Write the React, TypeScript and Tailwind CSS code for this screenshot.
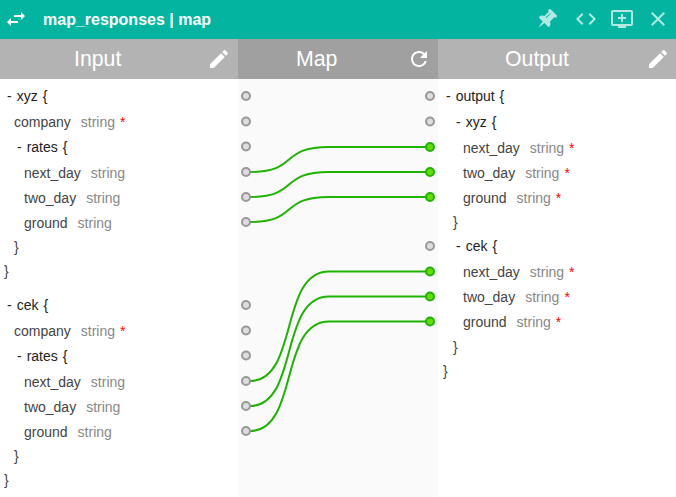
import { MdAddToQueue, MdClose, MdCode, MdEdit, MdRefresh, MdSwapHoriz } from "react-icons/md";

type Row = { kind: "open" | "field" | "close"; name?: string; required?: boolean; cls: string };

const inputGroup = (name: string): Row[] => [
  { kind: "open", name, cls: "h-[26px] pl-[7px]" },
  { kind: "field", name: "company", required: true, cls: "h-[25px] pl-[14px]" },
  { kind: "open", name: "rates", cls: "h-[26px] pl-[17px]" },
  { kind: "field", name: "next_day", cls: "h-[25px] pl-6" },
  { kind: "field", name: "two_day", cls: "h-[25px] pl-6" },
  { kind: "field", name: "ground", cls: "h-6 pl-6" },
  { kind: "close", cls: "h-6 pl-[14px]" },
  { kind: "close", cls: "h-[34px] pl-1" },
];

const inputRows: Row[] = [...inputGroup("xyz"), ...inputGroup("cek")];

const outputRows: Row[] = [
  { kind: "open", name: "output", cls: "h-[26px] pl-2" },
  { kind: "open", name: "xyz", cls: "h-[26px] pl-[18px]" },
  { kind: "field", name: "next_day", required: true, cls: "h-[25px] pl-[25px]" },
  { kind: "field", name: "two_day", required: true, cls: "h-[25px] pl-[25px]" },
  { kind: "field", name: "ground", required: true, cls: "h-6 pl-[25px]" },
  { kind: "close", cls: "h-6 pl-[15px]" },
  { kind: "open", name: "cek", cls: "h-[26px] pl-[18px]" },
  { kind: "field", name: "next_day", required: true, cls: "h-[25px] pl-[25px]" },
  { kind: "field", name: "two_day", required: true, cls: "h-[25px] pl-[25px]" },
  { kind: "field", name: "ground", required: true, cls: "h-[25px] pl-[25px]" },
  { kind: "close", cls: "h-6 pl-[15px]" },
  { kind: "close", cls: "h-6 pl-[5px]" },
];

function Tree({ rows }: { rows: Row[] }) {
  return (
    <div className="pt-[5px] text-sm leading-[25px]">
      {rows.map((row, i) => (
        <div key={i} className={`flex shrink-0 whitespace-pre ${row.cls}`}>
          {row.kind === "open" && (
            <div className="flex leading-[25px] text-[#222]">
              <span>-</span>
              <span className="ml-[5px]">{row.name}</span>
              <span className="ml-[5px]">{"{"}</span>
            </div>
          )}
          {row.kind === "field" && (
            <div className="flex leading-[25px]">
              <span className="text-[#444]">{row.name}</span>
              <span className="ml-[10px] text-[#888]">string</span>
              {row.required && <span className="ml-[5px] text-[#f00]">*</span>}
            </div>
          )}
          {row.kind === "close" && <span className="leading-[25px] text-[#444]">{"}"}</span>}
        </div>
      ))}
    </div>
  );
}

const sources = [17, 42.5, 67.5, 93, 118, 143, 226, 251.5, 276.5, 302, 327, 352];
const targets = [
  { y: 17 },
  { y: 42.5 },
  { y: 68, from: 93 },
  { y: 93, from: 118 },
  { y: 118, from: 143 },
  { y: 167 },
  { y: 192.5, from: 302 },
  { y: 217.5, from: 327 },
  { y: 242.5, from: 352 },
];

function MapCanvas() {
  return (
    <svg width="200" height="418" viewBox="0 0 200 418" className="block">
      {targets.map((t) =>
        t.from ? (
          <path
            key={t.y}
            d={`M12 ${t.from} C61 ${t.from} 41 ${t.y} 91 ${t.y} H188`}
            fill="none"
            stroke="#1eb300"
            strokeWidth="2"
          />
        ) : null,
      )}
      {sources.map((y) => (
        <circle key={y} cx="8" cy={y} r="4" fill="#ddd" stroke="#999" strokeWidth="2" />
      ))}
      {targets.map((t) => (
        <circle
          key={t.y}
          cx="192"
          cy={t.y}
          r="4"
          fill={t.from ? "#6d0" : "#ddd"}
          stroke={t.from ? "#1eb300" : "#999"}
          strokeWidth="2"
        />
      ))}
    </svg>
  );
}

function PinIcon() {
  return (
    <svg width="22" height="22" viewBox="0 0 1792 1792" fill="currentColor" className="rotate-45">
      <path d="M800 864v-448q0-14-9-23t-23-9-23 9-9 23v448q0 14 9 23t23 9 23-9 9-23zm672 352q0 26-19 45t-45 19h-429l-51 483q-2 12-10.5 20.5t-20.5 8.5h-1q-27 0-32-27l-76-485h-404q-26 0-45-19t-19-45q0-123 78.5-221.5t177.5-98.5v-512q-52 0-90-38t-38-90 38-90 90-38h640q52 0 90 38t38 90-38 90-90 38v512q99 0 177.500 98.500t78.500 221.500z" />
    </svg>
  );
}

export default function App() {
  return (
    <div className="flex h-[497px] w-[676px] flex-col overflow-hidden bg-white font-['Liberation_Sans',Arial,sans-serif]">
      <header className="flex h-[39px] shrink-0 items-center bg-[#03b5a0] pr-[6px] pl-1 text-white">
        <MdSwapHoriz size={24} className="mb-px" />
        <h1 className="ml-[15px] text-base font-bold">map_responses | map</h1>
        <div className="mb-px ml-auto flex items-center text-white/70">
          <PinIcon />
          <MdCode size={24} className="ml-4" />
          <MdAddToQueue size={24} className="ml-3" />
          <MdClose size={24} className="ml-3" />
        </div>
      </header>
      <div className="grid min-h-0 flex-1 grid-cols-[238px_200px_238px]">
        <section className="flex min-h-0 flex-col overflow-hidden">
          <div className="flex h-10 shrink-0 items-center bg-[#b3b3b3] pr-[7px] pl-[74px] text-[21.3px] text-white">
            <h2 className="pt-0.5">Input</h2>
            <MdEdit size={24} className="ml-auto" />
          </div>
          <Tree rows={inputRows} />
        </section>
        <section className="flex min-h-0 flex-col overflow-hidden bg-[#fafafa]">
          <div className="flex h-10 shrink-0 items-center bg-[#a0a0a0] pr-[7px] pl-[58px] text-[21.3px] text-white">
            <h2 className="pt-0.5">Map</h2>
            <MdRefresh size={24} className="ml-auto" />
          </div>
          <MapCanvas />
        </section>
        <section className="flex min-h-0 flex-col overflow-hidden">
          <div className="flex h-10 shrink-0 items-center bg-[#b3b3b3] pr-[6px] pl-[67px] text-[21.3px] text-white">
            <h2 className="pt-0.5">Output</h2>
            <MdEdit size={24} className="ml-auto" />
          </div>
          <Tree rows={outputRows} />
        </section>
      </div>
    </div>
  );
}
